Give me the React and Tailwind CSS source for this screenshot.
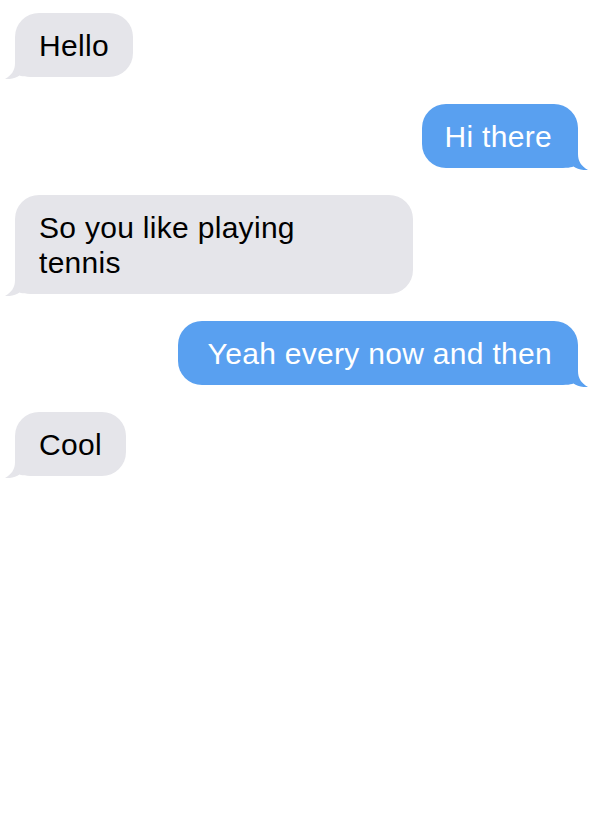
import React from "react";

function Tail({ color, side }) {
  const pos =
    side === "left"
      ? "left-[-11px] bottom-[-2px]"
      : "right-[-11px] bottom-[-2px] -scale-x-100";
  return (
    <svg
      className={`absolute ${pos}`}
      width="40"
      height="30"
      viewBox="0 0 40 30"
      aria-hidden="true"
    >
      <path
        d="M11 0 L11 14 C11 21 8 26 1 30 C7 30.5 12 29 15.5 26.5 C19 28 24 28 40 28 L40 0 Z"
        fill={color}
      />
    </svg>
  );
}

function Received({ children, className = "" }) {
  return (
    <div
      className={`relative self-start ml-[15px] max-w-[398px] rounded-[24px] bg-[#e5e5ea] px-[24px] py-[14.5px] text-[30px] leading-[35px] tracking-[0.3px] text-black ${className}`}
    >
      <Tail color="#e5e5ea" side="left" />
      <span className="relative block">{children}</span>
    </div>
  );
}

function Sent({ children, className = "" }) {
  return (
    <div
      className={`relative self-end mr-[18px] max-w-[420px] rounded-[24px] bg-[#59a0f0] py-[14.5px] text-[30px] leading-[35px] tracking-[0.3px] text-white ${className}`}
    >
      <Tail color="#59a0f0" side="right" />
      <span className="relative block">{children}</span>
    </div>
  );
}

export default function App() {
  return (
    <div
      className="min-h-[822px] w-[596px] overflow-hidden bg-white pt-[13px] flex flex-col gap-[27px]"
      style={{ fontFamily: '"Liberation Sans", Arial, sans-serif' }}
    >
      <Received>Hello</Received>
      <Sent className="pl-[23px] pr-[26px]">Hi there</Sent>
      <Received className="w-[398px]">
        <span className="block max-w-[320px]">So you like playing tennis</span>
      </Received>
      <Sent className="pl-[30px] pr-[26px]">Yeah every now and then</Sent>
      <Received>Cool</Received>
    </div>
  );
}
